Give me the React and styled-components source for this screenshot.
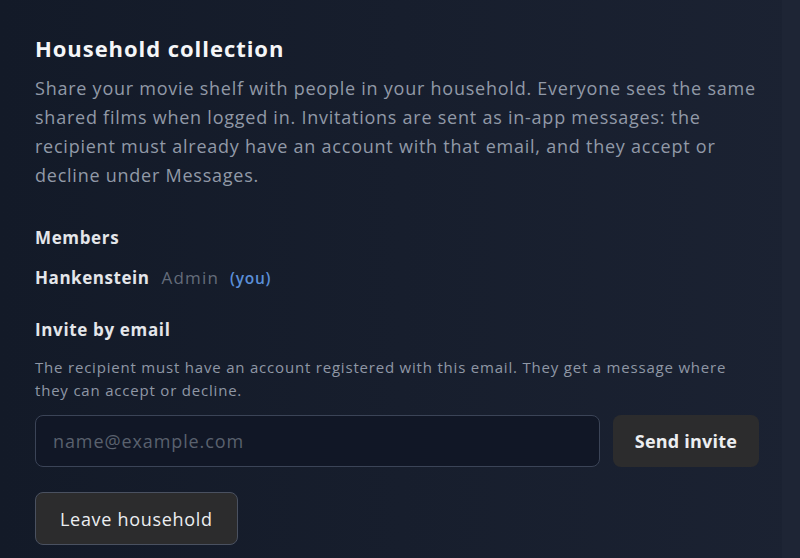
import React from "react";
import styled, { createGlobalStyle } from "styled-components";

const Global = createGlobalStyle`
  html, body { margin: 0; padding: 0; height: 100%; }
  body {
    background: #161c2b;
    font-family: "Open Sans", "Noto Sans", sans-serif;
    -webkit-font-smoothing: antialiased;
  }
  #root { height: 100%; }
`;

const Shell = styled.div`
  display: flex;
  height: 558px;
  overflow: hidden;
  background: linear-gradient(90deg, #131a28 0%, #171e2d 50%, #1b2232 100%);
`;

const Main = styled.main`
  flex: 1;
  padding: 34px 23px 0 35px;
  box-sizing: border-box;
`;

const Track = styled.div`
  width: 18px;
  flex: none;
  background: #1e2535;
`;

const Title = styled.h2`
  margin: 0;
  font-size: 22px;
  line-height: 28px;
  font-weight: 700;
  letter-spacing: 0.95px;
  color: #f5f6f8;
`;

const Lead = styled.p`
  margin: 12px 0 0;
  font-size: 18px;
  line-height: 29px;
  letter-spacing: 0.76px;
  color: #9199a7;
`;

const Label = styled.h3`
  margin: ${(p) => p.$mt}px 0 0;
  font-size: 17px;
  line-height: 24px;
  font-weight: 700;
  letter-spacing: 0.65px;
  color: #e4e6ea;
`;

const MemberRow = styled.div`
  margin-top: 16px;
  display: flex;
  align-items: baseline;
  line-height: 24px;
`;

const MemberName = styled.span`
  font-size: 17px;
  font-weight: 700;
  letter-spacing: 0.55px;
  color: #e4e6ea;
`;

const Role = styled.span`
  margin-left: 12px;
  font-size: 17px;
  letter-spacing: 1.2px;
  color: #646c7a;
`;

const You = styled.span`
  margin-left: 11px;
  font-size: 15.5px;
  font-weight: 600;
  letter-spacing: 0.7px;
  color: #5b8fd9;
`;

const Help = styled.p`
  margin: 14px 0 0;
  font-size: 15px;
  line-height: 23px;
  letter-spacing: 0.8px;
  color: #8f97a5;
`;

const InviteRow = styled.form`
  margin-top: 13px;
  display: flex;
  gap: 13px;
`;

const EmailInput = styled.input`
  flex: 1;
  height: 52px;
  box-sizing: border-box;
  padding: 0 17px;
  border: 1.5px solid #3b4457;
  border-radius: 8px;
  background: #111726;
  color: #e4e6ea;
  font: inherit;
  font-size: 18px;
  letter-spacing: 0.9px;
  outline: none;
  &::placeholder { color: #5a616e; }
`;

const Button = styled.button`
  height: ${(p) => p.$h}px;
  box-sizing: border-box;
  padding: 0 ${(p) => p.$px}px;
  border-radius: 8px;
  border: 1px solid ${(p) => (p.$outlined ? "#4a5160" : "transparent")};
  background: #2c2c2d;
  color: #eceef1;
  font-family: inherit;
  font-size: 18px;
  font-weight: ${(p) => p.$weight};
  letter-spacing: ${(p) => p.$ls}px;
  cursor: pointer;
  white-space: nowrap;
`;

const Footer = styled.div`
  margin-top: 25px;
`;

export default function App() {
  return (
    <>
      <Global />
      <Shell>
        <Main>
          <Title>Household collection</Title>
          <Lead>
            Share your movie shelf with people in your household. Everyone sees the same
            shared films when logged in. Invitations are sent as in-app messages: the
            recipient must already have an account with that email, and they accept or
            decline under Messages.
          </Lead>
          <Label $mt={36}>Members</Label>
          <MemberRow>
            <MemberName>Hankenstein</MemberName>
            <Role>Admin</Role>
            <You>(you)</You>
          </MemberRow>
          <Label $mt={28}>Invite by email</Label>
          <Help>
            The recipient must have an account registered with this email. They get a message where
            they can accept or decline.
          </Help>
          <InviteRow onSubmit={(e) => e.preventDefault()}>
            <EmailInput type="email" placeholder="name@example.com" />
            <Button type="submit" $h={52} $px={21} $weight={700} $ls={0.2}>Send invite</Button>
          </InviteRow>
          <Footer>
            <Button type="button" $h={53} $px={24} $weight={500} $ls={0.7} $outlined>Leave household</Button>
          </Footer>
        </Main>
        <Track />
      </Shell>
    </>
  );
}
